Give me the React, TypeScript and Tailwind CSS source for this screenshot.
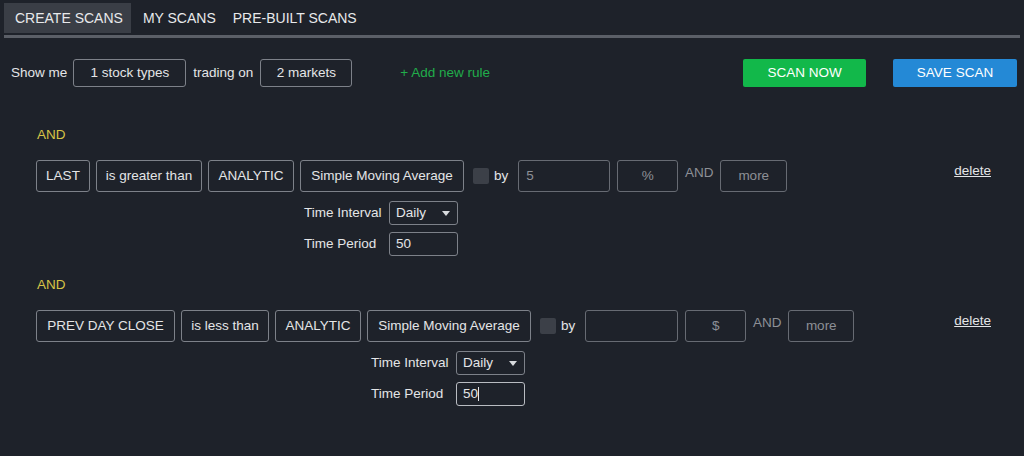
import React from "react";

const box =
  "h-8 flex items-center justify-center border border-[#7d8189] rounded-[3px] text-[13.5px] text-[#e4e5e7]";
const field =
  "h-8 flex items-center border border-[#676b73] rounded-[3px] text-[13.5px] text-[#8d9096]";

type RuleProps = {
  left: { label: string; w: string }[];
  value: string;
  inputW: string;
  unit: string;
  moreW: string;
  focused?: boolean;
};

const Rule = ({ left, value, inputW, unit, moreW, focused }: RuleProps) => {
  return (
    <div className="flex items-start justify-between pr-[33px]">
      <div className="flex items-start">
        {left.map((b) => (
          <div key={b.label} className={`${box} ${b.w} mr-[6px]`}>
            {b.label}
          </div>
        ))}
        <div className="flex flex-col">
          <div className={`${box} w-[164px]`}>Simple Moving Average</div>
          <div className="flex flex-col gap-[7px] pl-[4px] mt-[9px]">
            <div className="flex items-center">
              <span className="w-[85px] text-[13.5px] text-[#e4e5e7]">
                Time Interval
              </span>
              <div className="h-6 w-[69px] flex items-center justify-between border border-[#7d8189] rounded-[3px] pl-[6px] pr-[7px] text-[13.5px] text-[#e4e5e7]">
                <span>Daily</span>
                <svg width="8" height="5" viewBox="0 0 8 5">
                  <path d="M0 0h8L4 5z" fill="#d8dade" />
                </svg>
              </div>
            </div>
            <div className="flex items-center">
              <span className="w-[85px] text-[13.5px] text-[#e4e5e7]">
                Time Period
              </span>
              <div
                className={`h-6 w-[69px] flex items-center border rounded-[3px] pl-[6px] text-[13.5px] text-[#e4e5e7] ${
                  focused ? "border-[#b9bcc2]" : "border-[#7d8189]"
                }`}
              >
                50
                {focused && <span className="w-px h-[14px] bg-[#e4e5e7]" />}
              </div>
            </div>
          </div>
        </div>
        <div className="h-8 flex items-center ml-[9px]">
          <div className="w-4 h-4 bg-[#3c4048] rounded-[2px]" />
          <span className="ml-[5px] text-[13.5px] text-[#e4e5e7]">by</span>
        </div>
        <div className={`${field} ${inputW} ml-[10px] pl-[7px]`}>{value}</div>
        <div className={`${field} w-[61px] ml-[7px] justify-center`}>
          {unit}
        </div>
        <div className="h-8 w-[42px] flex items-center justify-center text-[13.5px] text-[#8d9096] -mt-[3px]">
          AND
        </div>
        <div className={`${field} ${moreW} justify-center`}>more</div>
      </div>
      <a className="text-[13.5px] text-[#e4e5e7] underline mt-[1px]">delete</a>
    </div>
  );
};

export default function App() {
  return (
    <div className="w-[1024px] h-[456px] bg-[#1e222a] font-['Liberation_Sans',Arial,sans-serif] overflow-hidden">
      <div className="px-[4px] pt-[3px]">
        <div className="flex h-[30px] text-[14px] text-[#e8e9eb]">
          <div className="bg-[#3a3e46] flex items-center pl-[11px] pr-[8px]">
            CREATE SCANS
          </div>
          <div className="flex items-center pl-[12px] pr-[17px]">MY SCANS</div>
          <div className="flex items-center">PRE-BUILT SCANS</div>
        </div>
        <div className="h-[3px] mt-[2px] bg-[#5b5f67]" />
      </div>

      <div className="flex items-center justify-between pl-[11px] pr-[7px] mt-[21px]">
        <div className="flex items-center text-[13.5px] text-[#e4e5e7]">
          <span>Show me</span>
          <div className="ml-[6px] h-7 w-[113px] flex items-center justify-center border border-[#7d8189] rounded-[3px]">
            1 stock types
          </div>
          <span className="ml-[7px]">trading on</span>
          <div className="ml-[7px] h-7 w-[92px] flex items-center justify-center border border-[#7d8189] rounded-[3px]">
            2 markets
          </div>
          <span className="ml-[48px] text-[#21ad4b]">+ Add new rule</span>
        </div>
        <div className="flex items-center gap-[27px]">
          <button className="h-7 w-[123px] bg-[#12b84a] rounded-[2px] text-[13.5px] text-white">
            SCAN NOW
          </button>
          <button className="h-7 w-[124px] bg-[#2489d6] rounded-[2px] text-[13.5px] text-white">
            SAVE SCAN
          </button>
        </div>
      </div>

      <div className="pl-[36px] mt-[40px]">
        <div className="pl-[1px] text-[13.5px] text-[#d6c446] leading-[15px]">
          AND
        </div>
        <div className="mt-[18px]">
          <Rule
            left={[
              { label: "LAST", w: "w-[54px]" },
              { label: "is greater than", w: "w-[106px]" },
              { label: "ANALYTIC", w: "w-[86px]" },
            ]}
            value="5"
            inputW="w-[92px]"
            unit="%"
            moreW="w-[67px]"
          />
        </div>
        <div className="pl-[1px] mt-[21px] text-[13.5px] text-[#d6c446] leading-[15px]">
          AND
        </div>
        <div className="mt-[18px]">
          <Rule
            left={[
              { label: "PREV DAY CLOSE", w: "w-[139px]" },
              { label: "is less than", w: "w-[88px]" },
              { label: "ANALYTIC", w: "w-[86px]" },
            ]}
            value=""
            inputW="w-[93px]"
            unit="$"
            moreW="w-[66px]"
            focused
          />
        </div>
      </div>
    </div>
  );
}
